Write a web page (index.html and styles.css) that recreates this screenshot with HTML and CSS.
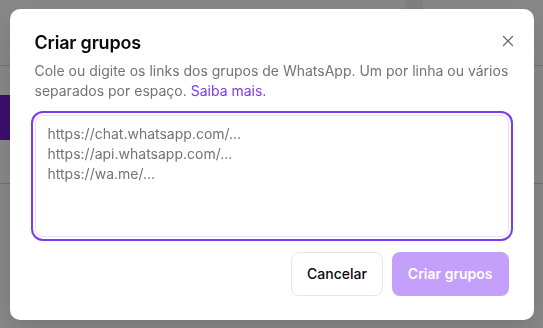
FILE: index.html
```html
<!DOCTYPE html>
<html lang="pt-BR">
<head>
    <meta charset="UTF-8">
    <meta name="viewport" content="width=device-width, initial-scale=1.0">
    <title>Criar grupos</title>
    <link rel="stylesheet" href="styles.css">
</head>
<body>
    <div class="app">
        <div class="topbar">
            <div class="topbar-tab"></div>
        </div>
        <div class="toolbar">
            <div class="nav-active"></div>
        </div>
        <div class="list-row"></div>
    </div>

    <div class="overlay">
        <div class="dialog" role="dialog" aria-labelledby="dialogTitle">
            <button class="close-btn" aria-label="Fechar">
                <svg width="12" height="12" viewBox="0 0 12 12" fill="none" stroke="currentColor" stroke-width="1.3" stroke-linecap="round">
                    <path d="M1.5 1.5l9 9M10.5 1.5l-9 9"/>
                </svg>
            </button>
            <h2 class="dialog-title" id="dialogTitle">Criar grupos</h2>
            <p class="dialog-desc">Cole ou digite os links dos grupos de WhatsApp. Um por linha ou vários separados por espaço. <a href="#" class="link">Saiba mais.</a></p>

            <textarea class="links-input" placeholder="https://chat.whatsapp.com/...&#10;https://api.whatsapp.com/...&#10;https://wa.me/..." autofocus></textarea>

            <div class="dialog-actions">
                <button class="btn btn-outline">Cancelar</button>
                <button class="btn btn-primary" disabled>Criar grupos</button>
            </div>
        </div>
    </div>
</body>
</html>
```

FILE: styles.css
```css
* {
    box-sizing: border-box;
}
body {
    margin: 0;
    font-family: Inter, 'Noto Sans', sans-serif;
    background: #fff;
    color: #0a0a0a;
    height: 100vh;
    overflow: hidden;
}

/* faux app behind the modal */
.app {
    height: 100%;
}
.topbar {
    height: 66px;
    border-bottom: 1px solid #d4d4d4;
}
.topbar-tab {
    margin-left: 405px;
    width: 18px;
    height: 66px;
    background: #f2f2f2;
}
.toolbar {
    height: 118px;
    padding-top: 29px;
    border-bottom: 1px solid #d4d4d4;
}
.nav-active {
    width: 40px;
    height: 45px;
    background: #6d1ad0;
}
.list-row {
    height: 60px;
}

.overlay {
    position: fixed;
    inset: 0;
    background: rgba(0, 0, 0, 0.47);
    display: flex;
    align-items: center;
    justify-content: center;
}
.dialog {
    position: relative;
    width: 524px;
    background: #fff;
    border-radius: 10px;
    padding: 20px 25px 24px;
    box-shadow: 0 10px 25px rgba(0, 0, 0, 0.12);
}
.close-btn {
    position: absolute;
    top: 24px;
    right: 18px;
    width: 16px;
    height: 16px;
    padding: 0;
    border: none;
    background: none;
    color: #6b6b6b;
    display: flex;
    align-items: center;
    justify-content: center;
    cursor: pointer;
}
.dialog-title {
    margin: 0;
    font-size: 18px;
    font-weight: 600;
    line-height: 28px;
    letter-spacing: -0.2px;
}
.dialog-desc {
    margin: 4px 0 0;
    font-size: 14px;
    line-height: 20px;
    color: #737373;
}
.link {
    color: #7c3aed;
    text-decoration: none;
}
.links-input {
    display: block;
    width: 100%;
    height: 122px;
    margin-top: 14px;
    padding: 8px 12px;
    border: 1px solid #e4ddf5;
    border-radius: 8px;
    font-family: inherit;
    font-size: 14px;
    line-height: 20px;
    color: #0a0a0a;
    resize: none;
    outline: none;
    box-shadow: 0 0 0 2px #fff, 0 0 0 4px #7c3aed;
}
.links-input::placeholder {
    color: #737373;
}
.dialog-actions {
    display: flex;
    justify-content: flex-end;
    gap: 9px;
    margin-top: 15px;
}
.btn {
    height: 44px;
    padding: 0 16px;
    border-radius: 8px;
    font-family: inherit;
    font-size: 14px;
    font-weight: 500;
    cursor: pointer;
}
.btn-outline {
    padding: 0 15px;
    background: #fff;
    color: #0a0a0a;
    border: 1px solid #e5e5e5;
}
.btn-primary {
    background: #c4a0fb;
    color: #fff;
    border: none;
    font-weight: 600;
}
.btn-primary:disabled {
    cursor: not-allowed;
}
```
